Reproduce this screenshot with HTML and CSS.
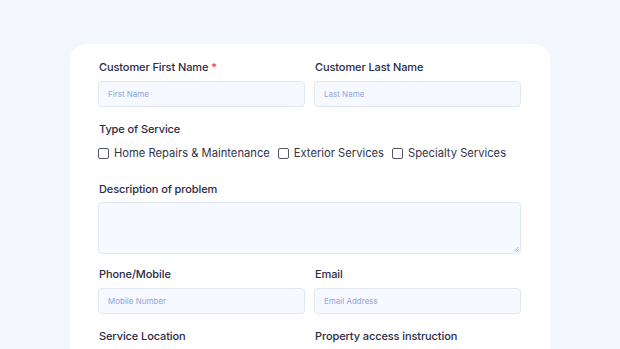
FILE: index.html
```html
<!DOCTYPE html>
<html lang="en">
<head>
<meta charset="utf-8">
<title>Service Request</title>
<link rel="stylesheet" href="styles.css">
</head>
<body>
<form class="card">
  <div class="row two">
    <div class="field">
      <label class="label">Customer First Name <span class="req">*</span></label>
      <div class="input"><span class="ph">First Name</span></div>
    </div>
    <div class="field">
      <label class="label">Customer Last Name</label>
      <div class="input"><span class="ph">Last Name</span></div>
    </div>
  </div>
  <div class="row">
    <div class="field">
      <label class="label">Type of Service</label>
      <div class="checks">
        <span class="check"><span class="box"></span>Home Repairs &amp; Maintenance</span>
        <span class="check"><span class="box"></span>Exterior Services</span>
        <span class="check"><span class="box"></span>Specialty Services</span>
      </div>
    </div>
  </div>
  <div class="row desc">
    <div class="field">
      <label class="label">Description of problem</label>
      <div class="textarea">
        <svg class="grip" width="6" height="6" viewBox="0 0 6 6"><path d="M5.5 1 L1 5.5 M5.5 3.5 L3.5 5.5" stroke="#9a9aa6" stroke-width="0.8" fill="none"/></svg>
      </div>
    </div>
  </div>
  <div class="row two">
    <div class="field">
      <label class="label">Phone/Mobile</label>
      <div class="input"><span class="ph">Mobile Number</span></div>
    </div>
    <div class="field">
      <label class="label">Email</label>
      <div class="input"><span class="ph">Email Address</span></div>
    </div>
  </div>
  <div class="row two">
    <div class="field">
      <label class="label">Service Location</label>
    </div>
    <div class="field">
      <label class="label">Property access instruction</label>
    </div>
  </div>
</form>
</body>
</html>
```
FILE: styles.css
```css
html, body {
  margin: 0;
  padding: 0;
  background: #f3f6fd;
  overflow: hidden;
  height: 349px;
}
body {
  font-family: Inter, "Noto Sans", sans-serif;
  color: #2b2a45;
}
.card {
  margin: 44px 0 0 70px;
  width: 480px;
  height: 305px;
  box-sizing: border-box;
  background: #ffffff;
  border-radius: 17px 17px 0 0;
  padding: 16px 29px 0 28px;
  display: flex;
  flex-direction: column;
  gap: 15px;
}
.row {
  display: flex;
}
.row.two {
  display: grid;
  grid-template-columns: 1fr 1fr;
  column-gap: 9px;
}
.field {
  display: flex;
  flex-direction: column;
  gap: 7px;
  flex: 1;
}
.desc {
  margin-bottom: -2px;
}
.desc .field {
  gap: 6px;
}
.label {
  font-size: 11px;
  line-height: 14px;
  font-weight: 500;
  padding-left: 1px;
  letter-spacing: -0.1px;
  color: #2b2a45;
}
.req {
  color: #e53935;
  margin-left: 0;
}
.input {
  height: 26px;
  box-sizing: border-box;
  background: #f6f9ff;
  border: 1px solid #dfe7f5;
  border-radius: 4px;
  display: flex;
  align-items: center;
  padding-left: 9px;
}
.ph {
  font-size: 8px;
  color: #91a5d8;
}
.checks {
  display: flex;
  align-items: center;
  gap: 8px;
  height: 16px;
  margin-top: 2px;
  margin-bottom: 6px;
}
.check {
  display: flex;
  align-items: center;
  gap: 5px;
  font-size: 11.2px;
  color: #33334a;
  white-space: nowrap;
}
.box {
  width: 9px;
  height: 9px;
  border: 1px solid #55556a;
  border-radius: 2px;
  background: #fff;
}
.textarea {
  height: 52px;
  box-sizing: border-box;
  background: #f6f9ff;
  border: 1px solid #dfe7f5;
  border-radius: 4px;
  position: relative;
}
.grip {
  position: absolute;
  right: 1px;
  bottom: 1px;
}
```
